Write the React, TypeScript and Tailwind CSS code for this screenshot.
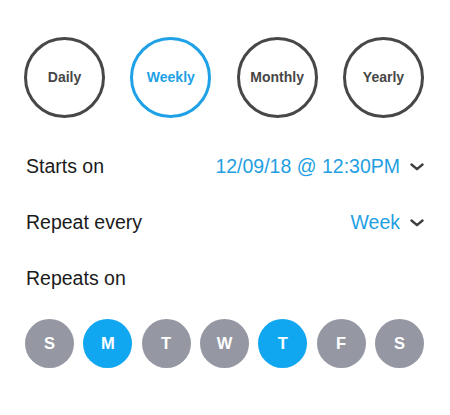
import { useState } from "react";

const periods = ["Daily", "Weekly", "Monthly", "Yearly"];
const days = ["S", "M", "T", "W", "T", "F", "S"];

function Chevron() {
  return (
    <svg width="14" height="8" viewBox="0 0 14 8" className="ml-[10px] shrink-0">
      <path d="M1.5 1.5 L7 6.2 L12.5 1.5" fill="none" stroke="#3f3f3f" strokeWidth="2.4" strokeLinecap="round" strokeLinejoin="round" />
    </svg>
  );
}

function Row({ label, value }: { label: string; value?: string }) {
  return (
    <div className="flex h-[56px] items-center justify-between pl-[2px]">
      <span className="text-[19.5px] text-[#1b1b1b]">{label}</span>
      {value && (
        <div className="flex items-center">
          <span className="text-[19.5px] text-[#1f9fe2]">{value}</span>
          <Chevron />
        </div>
      )}
    </div>
  );
}

export default function App() {
  const [period, setPeriod] = useState("Weekly");
  const [active, setActive] = useState<number[]>([1, 4]);

  const toggle = (i: number) =>
    setActive((a) => (a.includes(i) ? a.filter((x) => x !== i) : [...a, i]));

  return (
    <div className="h-[415px] w-[450px] bg-white pl-6 pr-[26px] pt-[37px] font-['Liberation_Sans',Arial,sans-serif]">
      {/* Frequency */}
      <div className="flex justify-between">
        {periods.map((p) => (
          <button
            key={p}
            onClick={() => setPeriod(p)}
            className={`flex h-[81px] w-[81px] items-center justify-center rounded-full border-[3px] text-[14px] font-bold ${
              period === p ? "border-[#1ea1e6] text-[#1ea1e6]" : "border-[#474747] text-[#474747]"
            }`}
          >
            {p}
          </button>
        ))}
      </div>

      <div className="mt-[21px]">
        <Row label="Starts on" value="12/09/18 @ 12:30PM" />
        <Row label="Repeat every" value="Week" />
        <Row label="Repeats on" />
      </div>

      {/* Days */}
      <div className="mt-3 flex justify-between pl-px">
        {days.map((d, i) => (
          <button
            key={i}
            onClick={() => toggle(i)}
            className={`flex h-[49px] w-[49px] items-center justify-center rounded-full text-[16.5px] font-bold text-white ${
              active.includes(i) ? "bg-[#10a6f0]" : "bg-[#9598a3]"
            }`}
          >
            {d}
          </button>
        ))}
      </div>
    </div>
  );
}
